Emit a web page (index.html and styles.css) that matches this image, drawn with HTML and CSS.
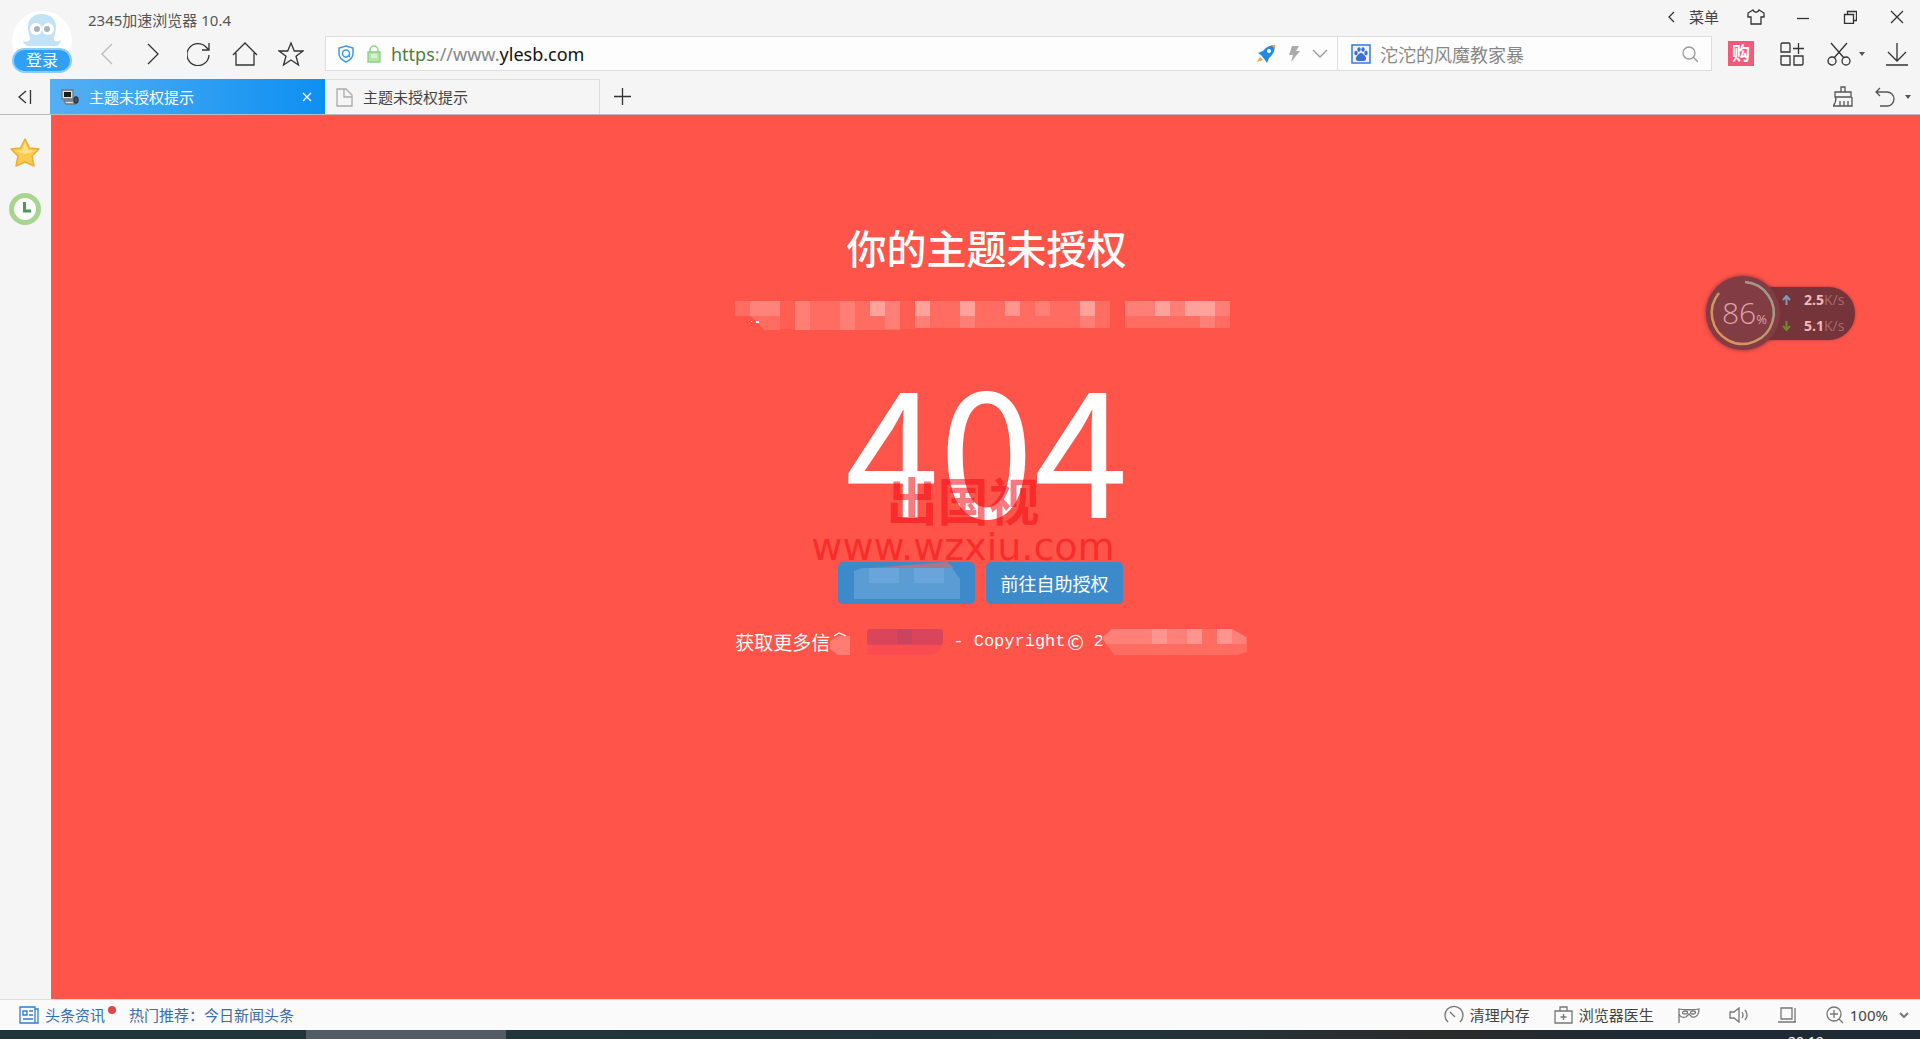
FILE: index.html
```html
<!DOCTYPE html>
<html lang="zh-CN">
<head>
<meta charset="utf-8">
<title>主题未授权提示</title>
<link rel="stylesheet" href="styles.css">
</head>
<body>
<header class="chrome">
  <div class="top">
    <button class="account" type="button">
      <svg class="mascot" width="62" height="62" viewBox="0 0 62 62" aria-hidden="true"><circle cx="31" cy="31" r="30" fill="#fff"/><path d="M17 17C17 8 23 4 31 4s14 5 14 13c0 6-2 8-2 12 1 4 5 2 7 1-1 4-4 7-8 6H20c-4 1-7-2-8-5 3 1 6 1 7-2 0-4-2-6-2-12z" fill="#c2e2f6"/><circle cx="25" cy="19" r="6" fill="#fff"/><circle cx="37" cy="19" r="6" fill="#fff"/><circle cx="26" cy="19" r="3" fill="#a9b4bd"/><circle cx="36" cy="19" r="3" fill="#a9b4bd"/></svg>
      <span class="login">登录</span>
    </button>
    <div class="bars">
      <div class="titlebar">
        <span class="app">2345加速浏览器 10.4</span>
        <button class="menu" type="button"><svg width="8" height="12" viewBox="0 0 8 12"><path d="M6 1 1 6l5 5"/></svg>菜单</button>
        <button class="win" type="button" aria-label="皮肤"><svg width="18" height="16" viewBox="0 0 18 16"><path d="M6 1 1 4v4h3v7h10V8h3V4l-5-3c-1 3-5 3-6 0z"/></svg></button>
        <button class="win" type="button" aria-label="最小化"><svg width="14" height="14" viewBox="0 0 14 14"><path d="M1 8.500h12"/></svg></button>
        <button class="win" type="button" aria-label="还原"><svg width="14" height="14" viewBox="0 0 14 14"><path d="M1.500 4.500h9v9h-9zM4.500 4V1.500h9v9H11"/></svg></button>
        <button class="win" type="button" aria-label="关闭"><svg width="14" height="14" viewBox="0 0 14 14"><path d="m1 1 12 12M13 1 1 13"/></svg></button>
      </div>
      <div class="toolbar">
        <button class="nav faint" type="button" aria-label="后退"><svg width="12" height="24" viewBox="0 0 12 24"><path d="M11 2 1 12l10 10"/></svg></button>
        <button class="nav" type="button" aria-label="前进"><svg width="12" height="24" viewBox="0 0 12 24"><path d="m1 2 10 10L1 22"/></svg></button>
        <button class="nav" type="button" aria-label="刷新"><svg width="24" height="24" viewBox="0 0 24 24"><path d="M22 13a11 11 0 1 1-3-8l3 3M22 1v7h-7"/></svg></button>
        <button class="nav" type="button" aria-label="主页"><svg width="26" height="24" viewBox="0 0 26 24"><path d="M1 13 13 1l12 12M4 11v12h18V11"/></svg></button>
        <button class="nav" type="button" aria-label="收藏"><svg width="26" height="26" viewBox="0 0 26 26"><path d="m13 2 3.300 8H25l-7 5.300 2.500 8.700L13 19l-7.500 5L8 15.300 1 10h8.700z"/></svg></button>
        <div class="address">
          <svg width="18" height="18" viewBox="0 0 18 18"><path d="m9 1 7 2v6c0 4-3 6-7 8-4-2-7-4-7-8V3z" stroke="#3d9ae8" stroke-width="1.500"/><circle cx="9" cy="8.500" r="3.500" stroke="#3d9ae8" stroke-width="1.500"/><path d="m11 10 2 2" stroke="#3d9ae8"/></svg>
          <svg width="14" height="18" viewBox="0 0 14 18"><path d="M3 8V5a4 4 0 0 1 8 0v3" stroke="#8fd088" stroke-width="1.500"/><path d="M1 7h12v10H1z" fill="#b4e6ab" stroke="#8fd088"/><path d="M4 10h6M4 12h6" stroke="#e3f7df"/></svg>
          <a class="url" href="https://www.ylesb.com"><span class="scheme">https</span><span class="muted">://www.</span>ylesb.com</a>
          <svg width="20" height="20" viewBox="0 0 20 20"><path d="M19 1c-6 0-10 3-12 6L2 9l3 2 4 5 2 3 2-5c4-3 6-7 6-13z" fill="#2489e0" stroke="none"/><circle cx="13" cy="7" r="2" fill="#fff" stroke="none"/><path d="m4 13-3 5 6-2zM15 1l4 4V1z" fill="#f6a04d" stroke="none"/></svg>
          <svg width="12" height="16" viewBox="0 0 12 16"><path d="M4 0h7L8 5h4L3 16l2-7H1z" fill="#aaa" stroke="none"/></svg>
          <svg width="16" height="10" viewBox="0 0 16 10"><path d="m1 1 7 7 7-7" stroke="#999"/></svg>
        </div>
        <label class="search">
          <svg width="20" height="20" viewBox="0 0 20 20"><path d="M1 1h18v18H1z" fill="#eef4ff" stroke="#3b78d8" stroke-width="1.500"/><g fill="#3b6fd6" stroke="none"><ellipse cx="5" cy="9" rx="1.700" ry="2.300"/><ellipse cx="8" cy="5.500" rx="1.700" ry="2.300"/><ellipse cx="12" cy="5.500" rx="1.700" ry="2.300"/><ellipse cx="15" cy="9" rx="1.700" ry="2.300"/><path d="M10 9c2 0 3 2 4 3 2 2 1 5-1 5H7c-2 0-3-3-1-5 1-1 2-3 4-3z"/></g></svg>
          <input type="text" placeholder="沱沱的风魔教家暴" aria-label="搜索">
          <svg width="16" height="16" viewBox="0 0 16 16"><circle cx="7" cy="7" r="6" stroke="#999"/><path d="m11 11 5 5" stroke="#999"/></svg>
        </label>
        <button class="tool buy" type="button"><span>购</span></button>
        <button class="tool grid" type="button" aria-label="扩展"><svg width="24" height="24" viewBox="0 0 24 24"><path d="M2 1h7l1 1v8H1V2zM1 14h9v9H2l-1-1zM14 14h9v8l-1 1h-8zM18.500 1v11M13 6.500h11"/></svg></button>
        <button class="tool cut" type="button" aria-label="截图"><svg width="24" height="24" viewBox="0 0 24 24"><path d="m4 1 13 15M20 1 7 16"/><circle cx="5" cy="19" r="4"/><circle cx="19" cy="19" r="4"/></svg><i class="caret"></i></button>
        <button class="tool down" type="button" aria-label="下载"><svg width="22" height="24" viewBox="0 0 22 24"><path d="M11 1v18M2 10l9 9 9-9M0 23h22"/></svg></button>
      </div>
    </div>
  </div>
  <div class="tabs">
    <button class="collapse" type="button" aria-label="收起"><svg width="14" height="14" viewBox="0 0 14 14"><path d="M8 1 1 7l7 6M12.500 0v14"/></svg></button>
    <button class="tab active" type="button"><svg width="18" height="16" viewBox="0 0 18 16"><path d="M1 1h11v9H1zM3 12h9l2 3H5z" fill="#ddd" stroke="#777"/><path d="M3 3h7v5H3z" fill="#122018" stroke="none"/><ellipse cx="15" cy="11" rx="2" ry="3" fill="#456" stroke="#333"/></svg><span>主题未授权提示</span><svg width="10" height="10" viewBox="0 0 10 10"><path d="m1 1 8 8M9 1 1 9" stroke="#fff"/></svg></button>
    <button class="tab" type="button"><svg width="17" height="19" viewBox="0 0 17 19"><path d="M1 1h9l6 6v11H1zM8 1v8h8" stroke="#aaa"/></svg><span>主题未授权提示</span></button>
    <button class="add" type="button" aria-label="新建标签"><svg width="17" height="17" viewBox="0 0 17 17"><path d="M8.500 0v17M0 8.500h17"/></svg></button>
    <button class="broom" type="button" aria-label="清理"><svg width="20" height="21" viewBox="0 0 20 21"><path d="M8 6V1h4v5M2 6h16v5H2zM3 11c0 4-1 7-3 9h19v-9M7 15v5M11 15v5M15 15v5"/></svg></button>
    <button class="undo" type="button" aria-label="恢复"><svg width="20" height="20" viewBox="0 0 20 20"><path d="M5 1 1 5l4 4M1 5h11a7 7 0 0 1 0 14H5"/></svg><i class="caret"></i></button>
  </div>
</header>
<div class="body">
  <aside class="side">
    <button type="button" aria-label="收藏夹"><svg width="32" height="32" viewBox="0 0 32 32"><path d="m16 2 4.500 9 9.500 1-7 7 2 10-9-4-9 4 2-10-7-7 9.500-1z" fill="#fccb4b" stroke="#e9ae35" stroke-width="1.500" stroke-linejoin="round"/><path d="m16 5 3 8 8 1-11 3-10-3 7-1z" fill="#ffe08a" stroke="none"/></svg></button>
    <button type="button" aria-label="历史"><svg width="32" height="32" viewBox="0 0 32 32"><circle cx="16" cy="16" r="13.500" fill="#fff" stroke="#a5d58e" stroke-width="5"/><path d="M15.500 9v9H22" stroke="#4d9a52" stroke-width="3"/></svg></button>
  </aside>
  <main class="page">
    <h1>你的主题未授权</h1>
    <svg class="masked" width="495" height="29" viewBox="0 0 495 29" shape-rendering="crispEdges" aria-hidden="true">
      <path opacity=".14" d="M0 0h15v15H0zM60 0h105v29H60zM180 0h195v27H180zM390 0h105v27H390zM15 15h30v14H30z"/>
      <path opacity=".06" d="M45 0h15v28H45zM165 0h15v28h-15z"/>
      <path opacity=".13" d="M60 0h15v29H60zM105 0h15v29h-15zM135 0h30v15h-30zM150 15h15v13h-15zM180 0h15v27h-15zM225 0h15v27h-15zM300 0h15v15h-15zM345 0h15v27h-15zM390 0h105v15H390zM465 15h15v12h-15z"/>
      <path opacity=".28" d="M15 0h30v15H15zM135 0h15v15h-15zM180 0h15v15h-15zM225 0h15v15h-15zM270 0h15v15h-15zM345 0h15v15h-15zM420 0h15v15h-15zM450 0h30v15h-30z"/>
      <path opacity=".95" d="M16 20h1v1h-1zM21 20h3v2h-3z"/>
    </svg>
    <div class="code">404
      <div class="mark"><b>出国视</b><span>www.wzxiu.com</span></div>
    </div>
    <div class="actions">
      <a class="btn" href="#" aria-label="返回"><svg width="106" height="32" viewBox="0 0 106 32"><path d="M0 4 8 1h90l8 11v20H0z" fill="#5b9cd4"/><path d="M15 1h30v15H15zM60 1h30v15H60z" fill="#69a4da"/><path d="m16 1 77-6 7 6z" fill="#a7778f"/></svg></a>
      <a class="btn" href="#">前往自助授权</a>
    </div>
    <footer class="info">
      <span>获取更多信</span>
      <svg width="20" height="26" viewBox="0 0 20 26"><path d="M4 7 9 4l7 3" stroke="#fff"/><path d="M0 12 9 7h11v19H8L0 20z" fill="#ff7c72" stroke="none"/></svg>
      <svg class="link" width="76" height="26" viewBox="0 0 76 26"><path d="M0 15h76c-2 8-8 10-18 11H0z" fill="#fb4c51" stroke="none"/><rect width="76" height="16" rx="3" fill="#d9465b" stroke="none"/><path d="M30 0h15v15H30z" fill="#ca435f" stroke="none"/></svg>
      <span class="copy">- Copyright</span><span class="sign">©</span>
      <span class="copy year">2</span>
      <svg class="owner" width="146" height="26" viewBox="0 0 146 26"><path d="M0 9 10 0h119l16 8v15l-10 3H12z" fill="#ff6c62" stroke="none"/><path d="M0 9 10 0h90v15H4zM115 0h15l14 8v7h-29z" fill="#ff8078" stroke="none"/><path d="M50 0h15v15H50zM85 0h15v15H85zM115 0h15v15h-15z" fill="#ff958e" stroke="none"/></svg>
    </footer>
    <div class="meter">
      <div class="rates"><span><svg width="9" height="10" viewBox="0 0 9 10"><path d="M4.500 10V2M1 5l3.500-4L8 5" stroke="#7f9ab8" stroke-width="2"/></svg><b>2.5</b>K/s</span><span><svg width="9" height="10" viewBox="0 0 9 10"><path d="M4.500 0v8M1 5l3.500 4L8 5" stroke="#6e8a30" stroke-width="2"/></svg><b>5.1</b>K/s</span></div>
      <div class="dial"><svg width="74" height="74" viewBox="0 0 74 74"><defs><linearGradient id="ring" x1="1" y1="0" x2="0" y2="1"><stop offset="0" stop-color="#8f9b95"/><stop offset=".55" stop-color="#c59a68"/><stop offset="1" stop-color="#f08b51"/></linearGradient></defs><path d="M39 6a31 31 0 1 1-26 11" stroke="url(#ring)" stroke-width="2.500"/></svg><span>86<small>%</small></span></div>
    </div>
  </main>
</div>
<div class="status">
  <a class="news" href="#"><svg width="20" height="20" viewBox="0 0 20 20"><path d="M1 2h15v16H1zM16 4h3v14h-3M4 6h4v4H4zM10 6h4M10 10h4M4 14h10" stroke="#2e7fd2"/></svg>头条资讯<i class="dot"></i></a>
  <a class="hot" href="#">热门推荐：今日新闻头条</a>
  <button class="clean" type="button"><svg width="20" height="20" viewBox="0 0 20 20"><path d="M4 17a9 9 0 1 1 12 0M6 7l5 5"/></svg>清理内存</button>
  <button class="doctor" type="button"><svg width="19" height="18" viewBox="0 0 19 18"><path d="M1 5h17v12H1zM6 5V1h7v4M9.500 8v6M6.500 11h6"/></svg>浏览器医生</button>
  <button class="mask" type="button" aria-label="隐身"><svg width="22" height="16" viewBox="0 0 22 16"><path d="M1 16V2c3 1 17 1 20 0 0 6-3 9-7 8l-3-3-3 3c-3 1-6 0-7-3"/><ellipse cx="7" cy="5.500" rx="2.500" ry="1.500"/><ellipse cx="15" cy="5.500" rx="2.500" ry="1.500"/></svg></button>
  <button class="sound" type="button" aria-label="声音"><svg width="20" height="16" viewBox="0 0 20 16"><path d="M1 5h4l5-4v14l-5-4H1zM13 5q2 3 0 6M16 3q4 5 0 10"/></svg></button>
  <button class="screen" type="button" aria-label="窗口"><svg width="19" height="16" viewBox="0 0 19 16"><path d="M3 1h11v11H3zM0 15h18M17 1v14"/></svg></button>
  <button class="zoom" type="button"><svg width="18" height="18" viewBox="0 0 18 18"><circle cx="8" cy="8" r="7"/><path d="m13 13 4 4M4 8h8M8 4v8"/></svg>100%<svg width="10" height="6" viewBox="0 0 10 6"><path d="m1 1 4 4 4-4" stroke-width="2"/></svg></button>
</div>
<div class="taskbar"><div class="running"></div><div class="clock">20:19</div></div>
</body>
</html>
```
FILE: styles.css
```css
* { box-sizing: border-box; }
body {
  margin: 0;
  min-height: 100vh;
  display: flex;
  flex-direction: column;
  background: #f5f5f5;
  color: #444;
  font: 15px/20px "Noto Sans", "Noto Sans CJK SC", sans-serif;
}
button {
  display: flex;
  align-items: center;
  justify-content: center;
  padding: 0;
  border: 0;
  background: none;
  color: inherit;
  font: inherit;
  white-space: nowrap;
}
a { color: inherit; text-decoration: none; }
svg { flex: none; fill: none; stroke: #333; stroke-width: 1.3; }
.mascot, .masked, .btn svg { stroke: none; }
.btn svg { overflow: visible; }
.caret { border: 3px solid transparent; border-top: 4px solid #555; border-bottom: 0; }

.top { display: flex; height: 79px; }
.account { position: relative; width: 84px; padding: 3px 0 0; }
.login {
  position: absolute;
  left: 12px;
  top: 48px;
  width: 60px;
  height: 25px;
  border: 2px solid #8ccbfa;
  border-radius: 13px;
  background: #2ea0f6;
  color: #fff;
  font-size: 16px;
  line-height: 21px;
}
.bars { flex: 1; min-width: 0; }
.titlebar { display: flex; height: 36px; padding-left: 4px; }
.app { flex: 1; padding-top: 10px; font-size: 15px; color: #555; }
.menu { height: 34px; gap: 13px; padding-right: 13px; }
.win { width: 47px; height: 34px; }
.toolbar { display: flex; height: 35px; align-items: stretch; }
.nav { width: 46px; }
.faint svg { stroke: #bbb; }
.address, .search { display: flex; align-items: center; border: 1px solid #ddd; background: #fdfdfd; }
.address { flex: 1; margin-left: 11px; padding: 0 9px 0 11px; gap: 12px; min-width: 0; }
.url { flex: 1; margin-left: -2px; color: #111; font-size: 18px; }
.scheme { color: #4f7d3c; }
.muted { color: #888; }
.search { width: 374px; border-left: 0; padding: 0 13px; gap: 9px; }
.search input { flex: 1; min-width: 0; padding: 0; border: 0; outline: 0; background: none; font: 18px/24px "Noto Sans CJK SC", sans-serif; }
.search input::placeholder { color: #888; opacity: 1; }
.buy { width: 58px; }
.buy span { width: 26px; height: 25px; background: #f4597b; color: #fff; font-size: 18px; font-weight: 700; line-height: 24px; }
.grid { width: 44px; }
.cut { width: 60px; gap: 8px; padding-left: 4px; }
.down { width: 46px; }

.tabs { display: flex; height: 36px; border-bottom: 1px solid #bbb; }
.collapse { width: 50px; }
.tab { width: 275px; justify-content: flex-start; gap: 10px; padding: 0 13px 0 11px; border: 1px solid #ddd; border-width: 1px 1px 0 0; }
.tab span { flex: 1; text-align: left; }
.active { border: 0; background: linear-gradient(90deg, #55b0f4, #0d8ff2); color: #fff; }
.add { width: 44px; margin-right: auto; }
.broom { width: 46px; }
.undo { width: 54px; gap: 10px; }
.broom svg, .undo svg { stroke: #555; }

.body { flex: 1; display: flex; }
.side { width: 51px; display: flex; flex-direction: column; align-items: center; gap: 24px; padding: 22px 2px 0 0; }
.page {
  position: relative;
  flex: 1;
  display: flex;
  flex-direction: column;
  align-items: center;
  padding: 108px 0 0 2px;
  background: #ff5449;
  color: #fff;
  font-family: KaiTi, "Noto Sans CJK SC", sans-serif;
}
h1 { margin: 0; font-size: 40px; line-height: 48px; font-weight: 500; }
.masked { margin: 30px 8px 0 0; fill: #fff; }
.code { position: relative; margin-top: 29px; font-size: 170px; line-height: 170px; }
.mark {
  position: absolute;
  left: -32px;
  top: 112px;
  display: flex;
  flex-direction: column;
  align-items: center;
  width: 300px;
  color: rgba(245, 10, 20, .55);
}
.mark b { font-size: 51px; line-height: 56px; }
.mark span { font: 38px/40px "DejaVu Sans", sans-serif; }
.actions { display: flex; gap: 11px; margin: 33px 12px 0 0; }
.btn {
  display: flex;
  align-items: center;
  justify-content: center;
  width: 137px;
  height: 42px;
  border-radius: 5px;
  background: #3d8acb;
  font-size: 18px;
}
.info { display: flex; align-items: center; height: 26px; margin: 25px 0 0; padding-left: 10px; font-size: 19px; }
.link { margin: 0 10px 0 17px; }
.copy { font: 17px/24px "Liberation Mono", monospace; white-space: pre; }
.sign { width: 20px; text-align: center; font-size: 20px; line-height: 24px; }
.year { margin-left: 8px; }
.owner { margin-left: -2px; }

.meter { position: absolute; right: 65px; top: 161px; width: 149px; height: 74px; font-family: "Open Sans", sans-serif; color: #dfa3a6; }
.rates {
  position: absolute;
  left: 37px;
  right: 0;
  top: 11px;
  height: 53px;
  padding-left: 39px;
  border-radius: 27px;
  background: #75333a;
  box-shadow: 0 0 3px #a53e40;
}
.rates span { display: flex; align-items: center; height: 26px; font-size: 14px; color: #a66b6e; }
.rates b { margin-left: 13px; color: #efbcbc; }
.dial { position: absolute; left: 0; top: 0; width: 74px; height: 74px; border-radius: 50%; background: #813c44; box-shadow: 0 0 4px #803036; }
.dial span { position: absolute; left: 16px; top: 17px; font-size: 30px; line-height: 40px; font-weight: 300; }
.dial small { font-size: 13px; font-weight: 400; }

.status { display: flex; align-items: center; height: 31px; padding: 0 11px 0 19px; border-top: 1px solid #ddd; background: #fafafa; }
.status svg { stroke: #777; }
.news { display: flex; align-items: center; gap: 6px; color: #2f6fb8; }
.dot { width: 8px; height: 8px; margin: 0 0 10px -3px; border-radius: 50%; background: #dc4848; }
.hot { margin: 0 auto 0 13px; color: #3c6cab; }
.clean, .doctor { gap: 6px; margin-right: 24px; }
.mask, .sound, .screen { margin-right: 29px; }
.zoom { gap: 6px; }
.zoom svg + svg { margin-left: 5px; }

.taskbar { display: flex; justify-content: space-between; height: 9px; overflow: hidden; background: linear-gradient(90deg, #20363a, #22333a 60%, #2b2b2b 75%, #1e2a34 85%); }
.running { width: 200px; margin-left: 306px; background: #535c64; }
.clock { width: 132px; padding-top: 2px; color: #fff; font-size: 14px; }
```
